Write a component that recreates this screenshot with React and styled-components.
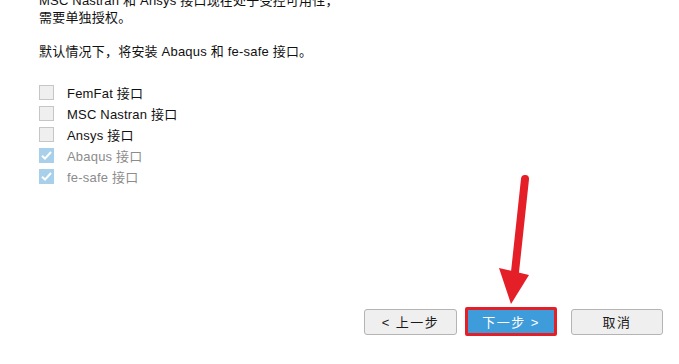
import React from "react";
import styled, { createGlobalStyle } from "styled-components";

const Global = createGlobalStyle`
  html, body { margin: 0; padding: 0; background: #fff; }
  body { font-family: "Liberation Sans", "Noto Sans CJK SC", sans-serif; }
`;

const Page = styled.div`
  position: relative;
  width: 679px;
  height: 364px;
  overflow: hidden;
  background: #fff;
  display: flex;
  flex-direction: column;
  font-size: 13px;
  color: #111;
`;

const Content = styled.div`
  padding-left: 39px;
  margin-top: -8px;
`;

const Para = styled.p`
  margin: 0 0 17px 0;
  line-height: 17px;
  letter-spacing: 0.2px;
`;

const List = styled.div`
  display: flex;
  flex-direction: column;
  margin-top: 22px;
`;

const Row = styled.div`
  display: flex;
  align-items: center;
  height: 21px;
  letter-spacing: 0.2px;
  color: ${(p) => (p.$disabled ? "#8c8c8c" : "#111")};
`;

const Box = styled.span`
  box-sizing: border-box;
  width: 15px;
  height: 15px;
  margin-right: 13px;
  display: inline-flex;
  align-items: center;
  justify-content: center;
  border: 1px solid ${(p) => (p.$checked ? "#a9d0ea" : "#c6c6c6")};
  background: ${(p) => (p.$checked ? "#a9d0ea" : "#efefef")};
`;

const Footer = styled.div`
  margin-top: auto;
  display: flex;
  align-items: center;
  justify-content: flex-end;
  padding: 0 16px 28px 0;
`;

const Button = styled.div`
  box-sizing: border-box;
  width: ${(p) => p.$w || 93}px;
  height: 26px;
  display: flex;
  align-items: center;
  justify-content: center;
  border: 1px solid #b4b4b4;
  border-radius: 3px;
  background: #efefef;
  color: #1a1a1a;
  font-size: 13px;
  letter-spacing: 1.5px;
  margin-left: ${(p) => p.$gap || 0}px;
`;

const NextButton = styled(Button)`
  height: 29px;
  border: 3px solid #e41f28;
  border-radius: 2px;
  background: #3f9cdb;
  color: #fff;
`;

const Arrow = styled.svg`
  position: absolute;
  left: 0;
  top: 0;
  pointer-events: none;
`;

const Check = () => (
  <svg width="13" height="13" viewBox="0 0 13 13">
    <path d="M2 6.8 L5 9.6 L11 3" fill="none" stroke="#fff" strokeWidth="2" />
  </svg>
);

const items = [
  { label: "FemFat 接口", checked: false },
  { label: "MSC Nastran 接口", checked: false },
  { label: "Ansys 接口", checked: false },
  { label: "Abaqus 接口", checked: true },
  { label: "fe-safe 接口", checked: true },
];

export default function App() {
  return (
    <Page>
      <Global />
      <Content>
        <Para>
          MSC Nastran 和 Ansys 接口现在处于受控可用性，
          <br />
          需要单独授权。
        </Para>
        <Para>默认情况下，将安装 Abaqus 和 fe-safe 接口。</Para>
        <List>
          {items.map((it) => (
            <Row key={it.label} $disabled={it.checked}>
              <Box $checked={it.checked}>{it.checked && <Check />}</Box>
              {it.label}
            </Row>
          ))}
        </List>
      </Content>
      <Footer>
        <Button $w={93}>&lt; 上一步</Button>
        <NextButton $w={92} $gap={8}>下一步 &gt;</NextButton>
        <Button $w={92} $gap={14}>取消</Button>
      </Footer>
      <Arrow width="679" height="364" viewBox="0 0 679 364">
        <line x1="525" y1="179" x2="515" y2="272" stroke="#e41f28" strokeWidth="8" strokeLinecap="round" />
        <polygon points="499,268 529,275 511,304" fill="#e41f28" />
      </Arrow>
    </Page>
  );
}
